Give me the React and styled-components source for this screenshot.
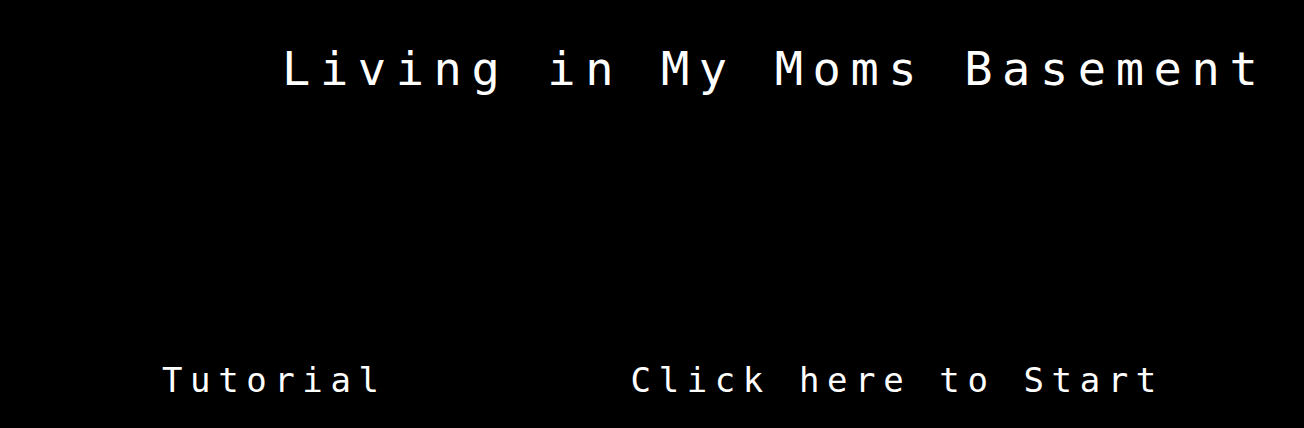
import React from "react";
import styled, { createGlobalStyle } from "styled-components";

const GlobalStyle = createGlobalStyle`
  html, body {
    margin: 0;
    padding: 0;
    background: #000;
  }
  #root {
    height: 100vh;
  }
`;

const Screen = styled.div`
  height: 100%;
  background: #000;
  color: #fff;
  font-family: "DejaVu Sans Mono", "Liberation Mono", monospace;
  display: flex;
  flex-direction: column;
  justify-content: space-between;
  box-sizing: border-box;
  padding: 45px 0 31px;
  overflow: hidden;
`;

const Title = styled.h1`
  margin: 0;
  padding-left: 282px;
  font-size: 47px;
  font-weight: normal;
  line-height: 1;
  letter-spacing: 9.6px;
  white-space: pre;
`;

const Menu = styled.div`
  display: flex;
  align-items: baseline;
  gap: ${(props) => props.gap}px;
  padding-left: 162px;
`;

const MenuItem = styled.div`
  font-size: 34px;
  line-height: 1;
  letter-spacing: 7.6px;
  white-space: pre;
  cursor: pointer;
`;

const App = () => {
  return (
    <>
      <GlobalStyle />
      <Screen>
        <Title>Living in My Moms Basement</Title>
        <Menu gap={244}>
          <MenuItem>Tutorial</MenuItem>
          <MenuItem>Click here to Start</MenuItem>
        </Menu>
      </Screen>
    </>
  );
};

export default App;
